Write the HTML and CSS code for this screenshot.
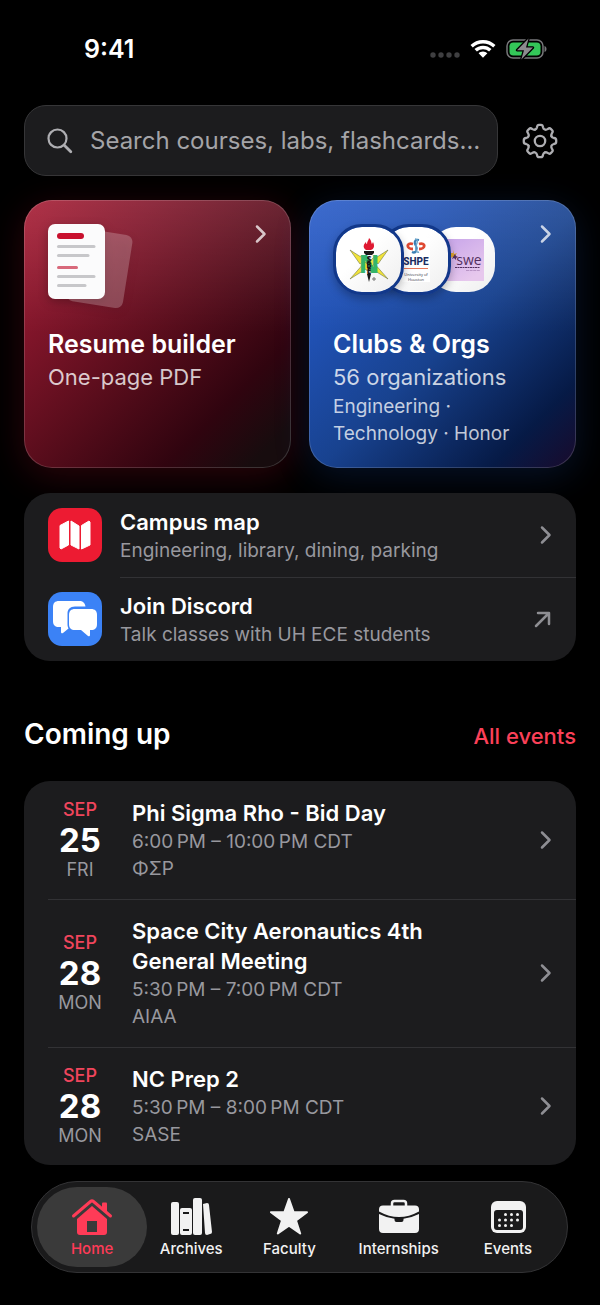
FILE: index.html
```html
<!DOCTYPE html>
<html lang="en">
<head>
  <meta charset="UTF-8">
  <meta name="viewport" content="width=device-width, initial-scale=1.0">
  <title>Home</title>
  <link rel="stylesheet" href="styles.css">
</head>
<body>
  <header class="status-bar">
    <span class="time">9:41</span>
    <div class="status-icons">
      <svg width="30" height="20" viewBox="0 0 30 20" fill="#3f3f41" aria-hidden="true">
        <circle cx="3" cy="16" r="2.700"/><circle cx="11" cy="16" r="2.700"/><circle cx="19" cy="16" r="2.700"/><circle cx="27" cy="16" r="2.700"/>
      </svg>
      <svg width="26" height="20" viewBox="0 0 26 20" fill="#fff" aria-hidden="true">
        <path d="M13 1C8.100 1 3.700 2.900.5 6l2.300 2.500A15 15 0 0 1 13 4.400a15 15 0 0 1 10.200 4.100L25.500 6C22.300 2.900 17.900 1 13 1z"/>
        <path d="M13 6.700c-3.300 0-6.300 1.300-8.500 3.400l2.400 2.500a9 9 0 0 1 12.200 0l2.400-2.500A12.300 12.300 0 0 0 13 6.700z"/>
        <path d="M13 12.400c-1.700 0-3.300.7-4.400 1.800L13 18.800l4.400-4.600a6.300 6.300 0 0 0-4.400-1.800z"/>
      </svg>
      <svg width="42" height="24" viewBox="0 0 42 24" aria-hidden="true">
        <rect x="1" y="3" width="36" height="18" rx="6" fill="none" stroke="#77777a" stroke-width="1.500"/>
        <path d="M38.500 9v6c1.500-.6 2-1.700 2-3s-.5-2.400-2-3z" fill="#77777a"/>
        <rect x="3.500" y="5.500" width="31" height="13" rx="3.800" fill="#34c759"/>
        <path d="M22.500 1.500 11 13.200h7L15.300 22.500 27 10.600h-7z" fill="#8b8b8e" stroke="#000" stroke-width="2.500" stroke-linejoin="round" paint-order="stroke"/>
      </svg>
    </div>
  </header>

  <main>
    <form class="search-row">
      <label class="search">
        <svg width="26" height="26" viewBox="0 0 26 26" fill="none" stroke="#aeaeb2" stroke-width="2.200" stroke-linecap="round" aria-hidden="true">
          <circle cx="10.500" cy="10.500" r="9"/><path d="m17.500 17.500 6.300 6.300" stroke-width="2.800"/>
        </svg>
        <input type="text" placeholder="Search courses, labs, flashcards…" aria-label="Search">
      </label>
      <button type="button" class="settings" aria-label="Settings">
        <svg width="36" height="36" viewBox="-18 -18 36 36" fill="none" stroke="#aeaeb2" stroke-width="2.300" stroke-linecap="round" aria-hidden="true">
          <defs>
            <path id="cog" d="M-4.750-11.460Q-3.400-12-3-13.800Q-2.700-16.200-1-16.200H1Q2.700-16.200 3-13.800Q3.400-12 4.750-11.460Q6.080-10.900 7.640-11.880Q9.550-13.360 10.750-12.160L12.160-10.750Q13.360-9.550 11.880-7.640Q10.900-6.080 11.460-4.750"/>
          </defs>
          <use href="#cog"/><use href="#cog" transform="rotate(90)"/><use href="#cog" transform="rotate(180)"/><use href="#cog" transform="rotate(270)"/>
          <circle r="5.200"/>
        </svg>
      </button>
    </form>

    <section class="cards">
      <a class="card card-red" href="#">
        <div class="card-art">
          <svg class="resume" width="88" height="88" viewBox="0 0 88 88" aria-hidden="true">
            <rect x="23" y="7" width="57" height="74" rx="7" fill="#fff" fill-opacity=".22" transform="rotate(9 51 44)"/>
            <rect x="0" y="0" width="57" height="75" rx="7" fill="#fbfbfc"/>
            <rect x="9" y="9" width="27" height="6" rx="3" fill="#c8102e"/>
            <g fill="#c7c7ca">
              <rect x="9" y="21" width="38.500" height="3" rx="1.500"/>
              <rect x="9" y="30" width="32.500" height="3" rx="1.500"/>
              <rect x="9" y="51" width="38.500" height="3" rx="1.500"/>
              <rect x="9" y="60" width="29.500" height="3" rx="1.500"/>
            </g>
            <rect x="9" y="42" width="21" height="3" rx="1.500" fill="#d8697b"/>
          </svg>
          <svg class="chevron" width="12" height="20" viewBox="0 0 12 20" aria-hidden="true"><path d="m2 2.500 7.500 7.500L2 17.500"/></svg>
        </div>
        <h2>Resume builder</h2>
        <p class="lead">One-page PDF</p>
      </a>

      <a class="card card-blue" href="#">
        <div class="card-art">
          <div class="clubs">
            <span class="club">
              <svg width="40" height="44" viewBox="0 0 40 44" aria-hidden="true">
                <path d="m1 12 11 7 1-2 9 9 2-2 15 17-16-10-1 2-9-9-2 2z" fill="#f1e33b" stroke="#58643a" stroke-width=".5"/>
                <path d="m39 12-11 7-1-2-9 9-2-2L1 41l16-10 1 2 9-9 2 2z" fill="#f1e33b" stroke="#58643a" stroke-width=".5"/>
                <path d="M15 13h10v2l-2 2H17l-2-2zM18 36h4l-1 4-1 4-1-4z" fill="#171717"/>
                <path d="M17 12c-4-3-2-6 0-8 0 2 1 2 1 2 0-3 2-4 2-6 3 3 2 5 3 6l1-2c2 4 1 7-2 8z" fill="#df1932"/>
                <text class="nsbe"><tspan x="20" y="35" class="nsbe-n">N</tspan><tspan x="20" y="24">S</tspan><tspan x="20" y="30">B</tspan><tspan x="20" y="36">E</tspan></text>
                <circle cx="25" cy="41" r="1.200" fill="none" stroke="#333" stroke-width=".7"/>
              </svg>
            </span>
            <span class="club">
              <svg width="28" height="44" viewBox="0 0 28 44" aria-hidden="true">
                <path d="M0 0h28v44H0z" fill="#fff"/>
                <path d="M11 6C4 4 4 11 11 11M17 6c7-2 7 5 0 5" fill="none" stroke="#df4932" stroke-width="2.800"/>
                <path d="M17 2c-5-1-5 3-3 6s0 8-4 6" fill="none" stroke="#397eb3" stroke-width="2.200"/>
                <path d="M13 1c4 0 2 4 1 7s0 7 3 6" fill="none" stroke="#6da5ca" stroke-width="1.500"/>
                <text x="14" y="27" class="shpe">SHPE</text>
                <path d="M2 30.500h24" stroke="#e87659"/>
                <text x="14" y="38" class="shpe-sub">University of</text><text x="14" y="43" class="shpe-sub">Houston</text>
              </svg>
            </span>
            <span class="club">
              <svg width="42" height="42" viewBox="0 0 42 42" aria-hidden="true">
                <defs><linearGradient id="lilac" x2=".6" y2="1"><stop stop-color="#c7a4e9"/><stop offset="1" stop-color="#e7c8ed"/></linearGradient></defs>
                <path d="M0 0h42v42H0z" fill="url(#lilac)"/>
                <path d="m11 11 1 4 3-1-2 3 1 2-3-1-3 1 1-3-1-2h3z" fill="#dda32e"/>
                <path d="m13 15 1 2 2 1-2 1v2l-2-2-2 1 1-2z" fill="#533060"/>
                <text x="27" y="26" class="swe">swe</text>
                <path d="M13 28.500h25" stroke="#533060" stroke-dasharray="2 .5"/><path d="M24 31.500h14" stroke="#a67fb4" stroke-dasharray="3 .6" stroke-width=".7"/>
              </svg>
            </span>
          </div>
          <svg class="chevron" width="12" height="20" viewBox="0 0 12 20" aria-hidden="true"><path d="m2 2.500 7.500 7.500L2 17.500"/></svg>
        </div>
        <h2>Clubs &amp; Orgs</h2>
        <p class="lead">56 organizations</p>
        <p class="tags">Engineering · Technology · Honor</p>
      </a>
    </section>

    <section class="panel links">
      <a class="link-row" href="#">
        <span class="app-icon red">
          <svg width="32" height="30" viewBox="0 0 32 30" fill="#fff" stroke="#fff" stroke-linejoin="round" aria-hidden="true">
            <path d="M1 5.500 9.500 1v24L2 29l-1-1zM12 1l8 5v23l-8-4zM22.500 5.500 30 1l1 1v23l-8.500 4z"/>
          </svg>
        </span>
        <span class="link-text"><strong>Campus map</strong><small>Engineering, library, dining, parking</small></span>
        <svg class="chevron" width="12" height="20" viewBox="0 0 12 20" aria-hidden="true"><path d="m2 2.500 7.500 7.500L2 17.500"/></svg>
      </a>
      <a class="link-row" href="#">
        <span class="app-icon blue">
          <svg width="46" height="38" viewBox="0 0 46 38" fill="#fff" aria-hidden="true">
            <path d="M7 1h20c4 0 6 2 6.500 5.500H23c-5 0-7.500 3-7.500 7V24c0 2 .4 3.300 1 4.500L11 33c-1 .7-2 .2-2-1v-5H7c-4 0-6-2-6-6V7c0-4 2-6 6-6z"/>
            <path d="M23 9h16c4 0 6 2 6 6v9c0 4-2 6-6 6h-1v5c0 1.300-1 1.600-2 1l-7-6h-6c-4 0-6-2-6-6v-9c0-4 2-6 6-6z"/>
          </svg>
        </span>
        <span class="link-text"><strong>Join Discord</strong><small>Talk classes with UH ECE students</small></span>
        <svg class="arrow" width="18" height="18" viewBox="0 0 18 18" aria-hidden="true"><path d="M2 16 15 3M4 3h11v11"/></svg>
      </a>
    </section>

    <div class="section-head">
      <h1>Coming up</h1>
      <a href="#">All events</a>
    </div>

    <section class="panel events">
      <a class="event" href="#">
        <time datetime="09-25"><span class="month">SEP</span><b>25</b><span>FRI</span></time>
        <div class="event-text">
          <h3>Phi Sigma Rho - Bid Day</h3>
          <p>6:00&#8239;PM – 10:00&#8239;PM CDT</p>
          <p>ΦΣΡ</p>
        </div>
        <svg class="chevron" width="12" height="20" viewBox="0 0 12 20" aria-hidden="true"><path d="m2 2.500 7.500 7.500L2 17.500"/></svg>
      </a>
      <a class="event" href="#">
        <time datetime="09-28"><span class="month">SEP</span><b>28</b><span>MON</span></time>
        <div class="event-text">
          <h3>Space City Aeronautics 4th General Meeting</h3>
          <p>5:30&#8239;PM – 7:00&#8239;PM CDT</p>
          <p>AIAA</p>
        </div>
        <svg class="chevron" width="12" height="20" viewBox="0 0 12 20" aria-hidden="true"><path d="m2 2.500 7.500 7.500L2 17.500"/></svg>
      </a>
      <a class="event" href="#">
        <time datetime="09-28"><span class="month">SEP</span><b>28</b><span>MON</span></time>
        <div class="event-text">
          <h3>NC Prep 2</h3>
          <p>5:30&#8239;PM – 8:00&#8239;PM CDT</p>
          <p>SASE</p>
        </div>
        <svg class="chevron" width="12" height="20" viewBox="0 0 12 20" aria-hidden="true"><path d="m2 2.500 7.500 7.500L2 17.500"/></svg>
      </a>
    </section>
  </main>

  <nav class="tab-bar">
    <a class="tab active" href="#">
      <svg width="42" height="40" viewBox="0 0 42 40" aria-hidden="true">
        <path d="M6 21 21 8l15 13v13c0 2-1 3-3 3H9c-2 0-3-1-3-3z" fill="currentColor"/>
        <path d="M16 23h10v11H16z" fill="#3a3a3a"/>
        <path d="M2.500 18 21 2.500 39.500 18" fill="none" stroke="#3a3a3a" stroke-width="7"/>
        <path d="M2.500 18 19.500 3.500q1.500-1.200 3 0L39.500 18" fill="none" stroke="currentColor" stroke-width="3" stroke-linecap="round"/>
        <path d="M31 5.500q0-1 1-1h3q1 0 1 1V15l-5-4z" fill="currentColor"/>
      </svg>
      <span>Home</span>
    </a>
    <a class="tab" href="#">
      <svg width="42" height="40" viewBox="0 0 42 40" fill="currentColor" aria-hidden="true">
        <rect x="1" y="4" width="8" height="33" rx="2"/>
        <path fill-rule="evenodd" d="M12 10h8q2 0 2 2v23q0 2-2 2h-8q-2 0-2-2V12q0-2 2-2zm1 4v2h6v-2zm0 17v2h6v-2z"/>
        <rect x="23" y="0" width="9" height="37" rx="2"/>
        <path d="m33 6 4-1q2 0 2 2l3 27q0 2-2 2l-3 1q-2 0-2-2z"/>
      </svg>
      <span>Archives</span>
    </a>
    <a class="tab" href="#">
      <svg width="42" height="40" viewBox="0 0 42 40" fill="currentColor" stroke="currentColor" stroke-width="2" stroke-linejoin="round" aria-hidden="true">
        <path d="m21 1 4.600 13.200H39L28 22.500l4.200 13L21 27.600l-11.200 7.900 4.200-13L3 14.200h13.400z"/>
      </svg>
      <span>Faculty</span>
    </a>
    <a class="tab" href="#">
      <svg width="42" height="40" viewBox="0 0 42 40" fill="currentColor" aria-hidden="true">
        <path d="M14 8V5.500Q14 3 16.500 3h9Q28 3 28 5.500V8" fill="none" stroke="currentColor" stroke-width="2.500"/>
        <path d="M5 7.500h32q4 0 4 4v2Q31 19 21 19T1 13.500v-2q0-4 4-4z"/>
        <path d="M1 16q8 4 15.500 4.700V22q0 2 2 2h5q2 0 2-2v-1.300Q33 20 41 16v15q0 4-4 4H5q-4 0-4-4z"/>
      </svg>
      <span>Internships</span>
    </a>
    <a class="tab" href="#">
      <svg width="42" height="40" viewBox="0 0 42 40" aria-hidden="true">
        <rect x="4" y="3" width="35" height="32" rx="6" fill="currentColor"/>
        <rect x="7" y="12" width="29" height="20" rx="3" fill="#1a1a1b"/>
        <g fill="currentColor">
          <circle cx="18.500" cy="16.500" r="1.500"/><circle cx="24.500" cy="16.500" r="1.500"/><circle cx="30.500" cy="16.500" r="1.500"/>
          <circle cx="12.500" cy="22" r="1.500"/><circle cx="18.500" cy="22" r="1.500"/><circle cx="24.500" cy="22" r="1.500"/><circle cx="30.500" cy="22" r="1.500"/>
          <circle cx="12.500" cy="27.500" r="1.500"/><circle cx="18.500" cy="27.500" r="1.500"/><circle cx="24.500" cy="27.500" r="1.500"/>
        </g>
      </svg>
      <span>Events</span>
    </a>
  </nav>
</body>
</html>
```
FILE: styles.css
```css
* {
  box-sizing: border-box;
}
html, body {
  margin: 0;
  padding: 0;
  background: #000;
  color: #fff;
  font-family: Inter, 'Liberation Sans', sans-serif;
}
h1, h2, h3, p {
  margin: 0;
}
a {
  color: inherit;
  text-decoration: none;
}
svg {
  display: block;
  flex: none;
}
.status-bar {
  display: flex;
  justify-content: space-between;
  align-items: center;
  height: 97px;
  padding: 0 52px 0 84px;
}
.time {
  font-size: 25px;
  font-weight: 600;
}
.status-icons {
  display: flex;
  align-items: center;
  gap: 10px;
}
main {
  padding: 8px 24px 0;
}
.search-row {
  display: flex;
  align-items: center;
  gap: 24px;
}
.search {
  flex: 1;
  display: flex;
  align-items: center;
  gap: 17px;
  height: 71px;
  padding: 0 12px 0 22px;
  background: #1c1c1e;
  border: 1px solid #363638;
  border-radius: 22px;
}
.search input {
  flex: 1;
  min-width: 0;
  padding: 0;
  border: none;
  outline: none;
  background: none;
  color: #fff;
  font: 400 24px Inter, 'Liberation Sans', sans-serif;
}
.search input::placeholder {
  color: #a4a4a8;
  opacity: 1;
}
.settings {
  padding: 0;
  margin-right: 18px;
  border: none;
  background: none;
  cursor: pointer;
}

/* feature cards */
.cards {
  display: grid;
  grid-template-columns: 1fr 1fr;
  gap: 18px;
  margin-top: 24px;
}
.card {
  min-height: 268px;
  padding: 23px 23px 20px;
  border: 1px solid rgba(255, 255, 255, 0.16);
  border-radius: 28px;
}
.card-red {
  background: linear-gradient(to bottom, rgba(255, 255, 255, 0.1), transparent 50%), linear-gradient(135deg, #a81c34 0%, #82152a 25%, #5a0d1c 50%, #30040f 76%, #170c0e 92%);
  background-origin: border-box;
  box-shadow: 0 8px 36px rgba(200, 16, 46, 0.22);
}
.card-blue {
  background: linear-gradient(to bottom, rgba(255, 255, 255, 0.1), transparent 50%), linear-gradient(135deg, #285bc9 0%, #2051b4 25%, #18428f 52%, #061a46 84%, #180b2d 99%);
  background-origin: border-box;
  box-shadow: 0 8px 36px rgba(30, 90, 200, 0.2);
}
.card-art {
  display: flex;
  justify-content: space-between;
  align-items: flex-start;
  height: 104px;
}
.resume {
  filter: drop-shadow(0 3px 5px rgba(0, 0, 0, 0.25));
}
.chevron, .arrow {
  fill: none;
  stroke: #8e8e93;
  stroke-width: 2.5;
  stroke-linecap: round;
  stroke-linejoin: round;
}
.card .chevron {
  stroke: rgba(255, 255, 255, 0.75);
}
.clubs {
  display: flex;
}
.club {
  position: relative;
  display: flex;
  align-items: center;
  justify-content: center;
  width: 71px;
  height: 71px;
  border: 3px solid #12388a;
  border-radius: 29px;
  background: linear-gradient(135deg, #fff 40%, #eee);
  background-clip: padding-box;
  box-shadow: 0 4px 9px rgba(0, 0, 0, 0.25);
}
.club + .club {
  margin-left: -24px;
}
.club:nth-child(1) {
  z-index: 3;
}
.club:nth-child(2) {
  z-index: 2;
}
.club:nth-child(3) {
  border-color: transparent;
  box-shadow: none;
}
.club text {
  text-anchor: middle;
  font-family: 'Open Sans', sans-serif;
}
.nsbe {
  fill: #171717;
  font-size: 8px;
  font-weight: 800;
}
.nsbe-n {
  fill: #35b56b;
  font-size: 24px;
}
.club .shpe {
  fill: #1b2d62;
  font-family: Roboto, sans-serif;
  font-size: 10px;
  font-weight: 800;
}
.shpe-sub {
  fill: #334;
  font-size: 4px;
}
.swe {
  fill: #533060;
  font-size: 14px;
}
.card h2 {
  font-size: 25px;
  line-height: 32px;
  font-weight: 600;
}
.card .lead {
  margin-top: 2px;
  font-size: 22px;
  line-height: 30px;
  color: rgba(255, 255, 255, 0.78);
}
.card .tags {
  margin-top: 1px;
  font-size: 19px;
  line-height: 27px;
  color: rgba(255, 255, 255, 0.75);
}

/* grouped lists */
.panel {
  background: #1c1c1e;
  border-radius: 26px;
}
.links {
  position: relative;
  margin-top: 25px;
}
.link-row {
  display: flex;
  align-items: center;
  height: 84px;
  padding: 0 24px;
}
.app-icon {
  display: flex;
  align-items: center;
  justify-content: center;
  width: 54px;
  height: 54px;
  margin-right: 18px;
  border-radius: 14px;
}
.app-icon.red {
  background: #ed1b32;
}
.app-icon.blue {
  background: #3b82f6;
}
.link-text {
  flex: 1;
  display: flex;
  flex-direction: column;
}
.link-row + .link-row {
  background: linear-gradient(#323235, #323235) 96px 0 / 100% 1px no-repeat;
}
.link-text strong, .event h3 {
  font-size: 22px;
  line-height: 30px;
  font-weight: 600;
}
.link-text small, .event p {
  font-size: 19px;
  line-height: 27px;
  color: #98989e;
}
.section-head {
  display: flex;
  justify-content: space-between;
  align-items: baseline;
  margin: 53px 0 27px;
}
.section-head h1 {
  font-size: 28px;
  line-height: 40px;
  font-weight: 600;
}
.section-head a {
  font-size: 22px;
  font-weight: 500;
  color: #fb4058;
}
.event {
  display: flex;
  align-items: center;
  padding: 17px 24px;
}
.event + .event {
  background: linear-gradient(#323235, #323235) 24px 0 / 100% 1px no-repeat;
}
.event time {
  display: flex;
  flex-direction: column;
  align-items: center;
  width: 64px;
  margin-right: 20px;
  font-size: 18px;
  line-height: 24px;
  color: #98989e;
}
.event time b {
  font-size: 33px;
  line-height: 36px;
  font-weight: 700;
  color: #fff;
}
.event .month {
  font-weight: 500;
  color: #f0455c;
}
.event-text {
  flex: 1;
  padding-right: 64px;
}

.tab-bar {
  display: grid;
  grid-template-columns: 110fr 88fr 108fr 110fr 108fr;
  margin: 16px 32px 32px 31px;
  padding: 5px;
  background: #1a1a1b;
  border: 1px solid #333335;
  border-radius: 46px;
}
.tab {
  display: flex;
  flex-direction: column;
  align-items: center;
  gap: 1px;
  padding-top: 11px;
  height: 80px;
  border-radius: 40px;
  color: #f2f2f2;
  font-size: 15px;
  line-height: 20px;
  font-weight: 500;
}
.tab.active {
  background: #3a3a3a;
  color: #ff3b57;
}
```
